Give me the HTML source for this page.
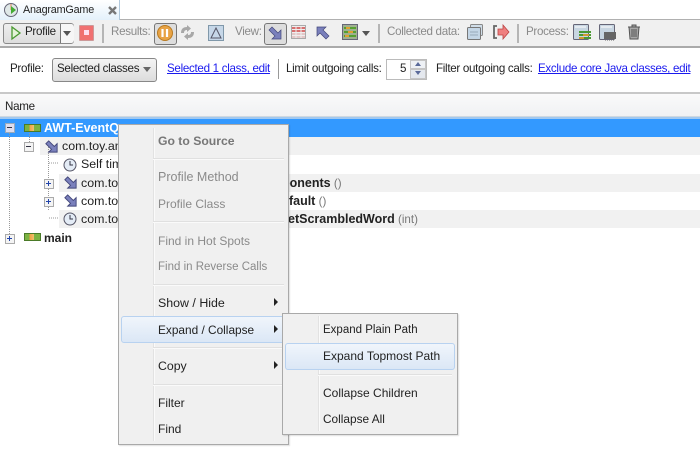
<!DOCTYPE html>
<html><head><meta charset="utf-8"><style>
html,body{margin:0;padding:0;background:#fff}
#p{position:relative;width:700px;height:457px;overflow:hidden;background:#fff;font-family:"Liberation Sans",sans-serif;font-size:11.6px;color:#222}
#p div,#p svg{position:absolute}
.t{white-space:nowrap;line-height:14px;letter-spacing:-.3px}
.g{color:#8a8a8a}
.l{color:#1a1aee;text-decoration:underline}
.b{font-weight:bold}
.n{font-size:12px;letter-spacing:0}
.r{font-size:12.4px;letter-spacing:0}
.m{background:#f0f0f0;border:1px solid #a9a9a9;box-shadow:1px 1px 1px rgba(0,0,0,.12)}
.h{background:linear-gradient(#f0f5fb,#dbe7f6);border:1px solid #b8d2f0;border-radius:3px}
.s{height:1px;background:#e0e0e0;border-bottom:1px solid #fafafa}
.v{width:1px;background:#e2e2e2;border-right:1px solid #fafafa}
.sep{width:2px;background:#b5b5b5;top:24px;height:19px}
.hl{background:#f1f1f1}
</style></head><body><div id="p">
<div style="left:0;top:19px;width:700px;height:1px;background:#b0b0b0"></div>
<div style="left:0;top:0;width:119px;height:20px;background:linear-gradient(#fff,#e4f1fb);border-right:1px solid #b0c8dc"></div>
<svg style="left:3px;top:2px" width="16" height="16" viewBox="0 0 16 16"><circle cx="8" cy="8" r="6.5" fill="#dfe8e8" stroke="#667"/><path d="M8 2v6" stroke="#d85"/><path d="M8 4l5 4-5 4z" fill="#4a3"/></svg>
<div class="t" style="left:23px;top:3px;font-size:10.8px;letter-spacing:-.2px">AnagramGame</div>
<svg style="left:108px;top:6px" width="9" height="9" viewBox="0 0 9 9"><path d="M1 1l7 7M8 1l-7 7" stroke="#777" stroke-width="2.4"/></svg>

<div style="left:0;top:20px;width:700px;height:26px;background:#f0f0f0;border-bottom:2px solid #aaa"></div>
<div style="left:3px;top:23px;width:69px;height:19px;border:1px solid #8a8a8a;border-radius:3px;background:linear-gradient(#eee,#ddd)"></div>
<div style="left:60px;top:24px;width:1px;height:19px;background:#777"></div>
<div style="left:61px;top:24px;width:13px;height:19px;background:#f6f6f6;border-radius:0 3px 3px 0"></div>
<svg style="left:10px;top:25px" width="13" height="16" viewBox="0 0 13 16"><path d="M2 2l8 6-8 6z" fill="#e4f3d8" stroke="#4a9a32" stroke-width="1.3"/></svg>
<div class="t" style="left:25px;top:25px">Profile</div>
<svg style="left:63px;top:31px" width="9" height="5"><path d="M0 0h8L4 5z" fill="#555"/></svg>
<div style="left:79px;top:25px;width:13px;height:14px;background:#f07070;border:1px solid #c99;border-radius:1px"></div>
<div style="left:84px;top:30px;width:5px;height:5px;background:#fde"></div>
<div class="sep" style="left:102px"></div>
<div class="t g" style="left:111px;top:25px">Results:</div>
<div style="left:154px;top:23px;width:21px;height:20px;border:1px solid #777;border-radius:3px;background:#ddd"></div>
<svg style="left:156px;top:24px" width="18" height="18"><circle cx="9" cy="9" r="7.5" fill="#e8a345" stroke="#b97a20"/><path d="M6.500 5v8M11 5v8" stroke="#fff" stroke-width="2.2"/></svg>
<svg style="left:179px;top:24px" width="17" height="17" viewBox="0 0 17 17"><path d="M2 9C2 5 4 3 8 3V1l4 3.500L8 8V6C6 6 5 7 5 9zM15 8c0 4-2 6-6 6v2l-4-3.500L9 9v2c2 0 3-1 3-3z" fill="#a8a8a8"/></svg>
<div style="left:208px;top:25px;width:14px;height:14px;background:#c6d7e8;border:1px solid #8098aa"></div>
<svg style="left:209px;top:26px" width="14" height="14"><path d="M7 2l5 10H2z" fill="none" stroke="#556"/></svg>
<div class="t g" style="left:235px;top:25px">View:</div>
<div style="left:264px;top:23px;width:21px;height:20px;border:1px solid #777;border-radius:3px;background:#ddd"></div>
<svg style="left:267px;top:25px" width="16" height="16" viewBox="0 0 16 16"><path d="M2 5l3-3 6 6 3-3v9H5l3-3z" fill="#7a80bc" stroke="#42467a" stroke-width=".7"/></svg>
<svg style="left:291px;top:25px" width="15" height="14"><rect width="15" height="14" fill="#eee"/><path d="M0 3h15M0 6h15" stroke="#d87070" stroke-width="2"/><path d="M0 9h15M0 12h15" stroke="#d9a0a0"/><path d="M5 0v14M10 0v14" stroke="#eee"/><rect x=".5" y=".5" width="14" height="13" fill="none" stroke="#aaa"/></svg>
<svg style="left:315px;top:25px" width="16" height="15" viewBox="0 0 16 15"><path d="M14 11l-3 3-6-6-3 3V2h9L8 5z" fill="#7a80bc" stroke="#42467a" stroke-width=".7"/></svg>
<svg style="left:342px;top:24px" width="16" height="16"><rect x=".5" y=".5" width="15" height="15" fill="#9fb090" stroke="#667"/><path d="M2 4h12M2 8h12M2 12h12" stroke="#55a030" stroke-width="2"/><path d="M4 4h4M6 8h5M3 12h4" stroke="#e0a030" stroke-width="2"/></svg>
<svg style="left:362px;top:31px" width="9" height="5"><path d="M0 0h8L4 5z" fill="#555"/></svg>
<div class="sep" style="left:378px"></div>
<div class="t g" style="left:387px;top:25px">Collected data:</div>
<svg style="left:467px;top:24px" width="16" height="16"><rect x="3.500" y=".5" width="12" height="11" rx="1" fill="#d0dde8" stroke="#888"/><rect x=".5" y="3.500" width="13" height="12" rx="1" fill="#c4d6e6" stroke="#777"/><path d="M3 8h8M3 11h8" stroke="#9ab"/></svg>
<svg style="left:492px;top:24px" width="18" height="16" viewBox="0 0 18 16"><path d="M5 2H2v12h3" fill="none" stroke="#666" stroke-width="1.8"/><path d="M6 5h5V1l6 7-6 7v-4H6z" fill="#ef7f7f" stroke="#b44" stroke-width=".8"/></svg>
<div class="sep" style="left:517px"></div>
<div class="t g" style="left:526px;top:25px">Process:</div>
<svg style="left:573px;top:24px" width="18" height="17"><rect x=".5" y=".5" width="15" height="15" rx="1" fill="#c8d6e2" stroke="#667"/><path d="M2 3h11" stroke="#fff"/><path d="M6 8h12M6 11h12M6 14h12" stroke="#4a9a32" stroke-width="2"/><path d="M10 11h6M6 14h5" stroke="#d09a30" stroke-width="2"/></svg>
<svg style="left:599px;top:24px" width="18" height="17"><rect x=".5" y=".5" width="15" height="15" rx="1" fill="#c8d6e2" stroke="#667"/><path d="M2 3h11" stroke="#fff"/><rect x="5" y="8" width="12" height="7" fill="#666"/><path d="M6 16h10" stroke="#666" stroke-dasharray="1 1"/></svg>
<svg style="left:627px;top:24px" width="14" height="16" viewBox="0 0 14 16"><path d="M1 3h12M5 3V1h4v2M2 3l1 12h8l1-12z" fill="#a8a8a8" stroke="#555"/><path d="M5 5v8M7 5v8M9 5v8" stroke="#555"/></svg>

<div class="t" style="left:10px;top:62px">Profile:</div>
<div style="left:52px;top:58px;width:103px;height:22px;border:1px solid #888;border-radius:3px;background:linear-gradient(#f4f4f4,#dcdcdc)"></div>
<div class="t" style="left:57px;top:62px">Selected classes</div>
<svg style="left:143px;top:67px" width="9" height="5"><path d="M0 0h8L4 5z" fill="#666"/></svg>
<div class="t l" style="left:167px;top:62px">Selected 1 class, edit</div>
<div style="left:278px;top:59px;width:1px;height:20px;background:#999"></div>
<div class="t" style="left:286px;top:62px">Limit outgoing calls:</div>
<div style="left:386px;top:59px;width:39px;height:19px;border:1px solid #bbb;background:#fff"></div>
<div class="t" style="left:400px;top:62px">5</div>
<div style="left:410px;top:60px;width:16px;height:9px;background:#eef1f5;border:1px solid #c5c5c5;box-sizing:border-box"></div>
<div style="left:410px;top:69px;width:16px;height:10px;background:#e4e8ee;border:1px solid #c5c5c5;box-sizing:border-box"></div>
<svg style="left:414px;top:62px" width="9" height="14"><path d="M1 4h6L4 0zM1 9h6l-3 4z" fill="#5a6a9a"/></svg>
<div class="t" style="left:436px;top:62px">Filter outgoing calls:</div>
<div class="t l" style="left:538px;top:62px">Exclude core Java classes, edit</div>

<div style="left:0;top:92px;width:700px;height:2px;background:#c8c8c8"></div>
<div style="left:0;top:94px;width:700px;height:22px;background:linear-gradient(#fafafa,#f0f1f3)"></div>
<div class="t" style="left:5px;top:100px">Name</div>
<div style="left:0;top:116px;width:700px;height:1px;background:#cfd8e0"></div>
<div style="left:0;top:117px;width:700px;height:2px;background:#a0c8f0"></div>
<div style="left:0;top:119px;width:700px;height:18px;background:#3399ff"></div>

<div class="hl" style="left:40px;top:137px;width:660px;height:18px"></div>
<div class="hl" style="left:59px;top:174px;width:641px;height:18px"></div>
<div class="hl" style="left:59px;top:210px;width:641px;height:18px"></div>

<svg style="left:0;top:119px" width="80" height="130" fill="none" stroke="#999" stroke-dasharray="1 1"><path d="M9.500 14V118M10 119h5M29.500 10v17M30 27h2M48.500 26V91M49 44h10M49 63h-3M49 81h-3M49 99h10"/></svg>
<div style="left:5px;top:123px;width:8px;height:8px;border:1px solid #9ab;background:#dde"></div><div style="left:7px;top:127px;width:5px;height:1px;background:#334"></div>
<div style="left:24px;top:142px;width:8px;height:8px;border:1px solid #aaa;background:#f4f4f4"></div><div style="left:26px;top:146px;width:5px;height:1px;background:#334"></div>
<div style="left:44px;top:179px;width:8px;height:8px;border:1px solid #aaa;background:#f4f4f4"></div><div style="left:46px;top:183px;width:5px;height:1px;background:#24a"></div><div style="left:48px;top:181px;width:1px;height:5px;background:#24a"></div>
<div style="left:44px;top:197px;width:8px;height:8px;border:1px solid #aaa;background:#f4f4f4"></div><div style="left:46px;top:201px;width:5px;height:1px;background:#24a"></div><div style="left:48px;top:199px;width:1px;height:5px;background:#24a"></div>
<div style="left:5px;top:234px;width:8px;height:8px;border:1px solid #aaa;background:#f4f4f4"></div><div style="left:7px;top:238px;width:5px;height:1px;background:#24a"></div><div style="left:9px;top:236px;width:1px;height:5px;background:#24a"></div>

<div style="left:24px;top:124px;width:15px;height:6px;border:1px solid #4a7a28;background:linear-gradient(90deg,#7cb342 30%,#f0a040 30%,#f0c070 60%,#7cb342 60%)"></div>
<div style="left:24px;top:233px;width:15px;height:6px;border:1px solid #4a7a28;background:linear-gradient(90deg,#7cb342 30%,#f0a040 30%,#f0c070 60%,#7cb342 60%)"></div>
<svg style="left:44px;top:139px" width="15" height="15" viewBox="0 0 16 16"><path d="M2 5l3-3 6 6 3-3v9H5l3-3z" fill="#7a80bc" stroke="#42467a"/></svg>
<svg style="left:63px;top:175px" width="15" height="15" viewBox="0 0 16 16"><path d="M2 5l3-3 6 6 3-3v9H5l3-3z" fill="#7a80bc" stroke="#42467a"/></svg>
<svg style="left:63px;top:193px" width="15" height="15" viewBox="0 0 16 16"><path d="M2 5l3-3 6 6 3-3v9H5l3-3z" fill="#7a80bc" stroke="#42467a"/></svg>
<svg style="left:63px;top:158px" width="14" height="14"><circle cx="7" cy="7" r="6" fill="#e4ecf6" stroke="#556"/><path d="M7 3v4h3" stroke="#334" fill="none"/></svg>
<svg style="left:63px;top:212px" width="14" height="14"><circle cx="7" cy="7" r="6" fill="#e4ecf6" stroke="#556"/><path d="M7 3v4h3" stroke="#334" fill="none"/></svg>

<div class="t b" style="left:44px;top:121px;color:#fff;font-size:12.5px;letter-spacing:0">AWT-EventQueue</div>
<div class="t r" style="left:62px;top:139px">com.toy.anagrams</div>
<div class="t r" style="left:81px;top:157px">Self time</div>
<div class="t r" style="left:81px;top:176px">com.toy.anagrams</div>
<div class="t r" style="left:81px;top:194px">com.toy.anagrams</div>
<div class="t r" style="left:81px;top:212px">com.toy.anagrams</div>
<div class="t b" style="left:44px;top:231px;font-size:12px;letter-spacing:0">main</div>
<div class="t" style="left:282px;top:176px;letter-spacing:0"><b style="font-size:12.500px">ponents</b> <span style="color:#777">()</span></div>
<div class="t" style="left:282px;top:194px;letter-spacing:0"><b style="font-size:12.500px">efault</b> <span style="color:#777">()</span></div>
<div class="t" style="left:288px;top:212px;letter-spacing:0"><b style="font-size:12.500px">etScrambledWord</b> <span style="color:#777">(int)</span></div>

<div class="m" style="left:118px;top:124px;width:169px;height:319px"></div>
<div class="v" style="left:153px;top:128px;height:313px"></div>
<div class="s" style="left:153px;top:158px;width:131px"></div>
<div class="s" style="left:153px;top:221px;width:131px"></div>
<div class="s" style="left:153px;top:284px;width:131px"></div>
<div class="s" style="left:153px;top:347px;width:131px"></div>
<div class="s" style="left:153px;top:384px;width:131px"></div>
<div class="h" style="left:121px;top:316px;width:163px;height:25px"></div>
<div class="t n b" style="left:158px;top:134px;color:#777;font-size:12.2px">Go to Source</div>
<div class="t n g" style="left:158px;top:170px;font-size:12.5px">Profile Method</div>
<div class="t n g" style="left:158px;top:197px">Profile Class</div>
<div class="t n g" style="left:158px;top:234px">Find in Hot Spots</div>
<div class="t n g" style="left:158px;top:260px;font-size:11.5px">Find in Reverse Calls</div>
<div class="t n" style="left:158px;top:296px;font-size:12.4px">Show / Hide</div>
<div class="t n" style="left:158px;top:323px;font-size:11.850px">Expand / Collapse</div>
<div class="t n" style="left:158px;top:359px;font-size:12.3px">Copy</div>
<div class="t n" style="left:158px;top:396px">Filter</div>
<div class="t n" style="left:158px;top:422px">Find</div>
<svg style="left:274px;top:298px" width="5" height="8"><path d="M0 0l4 4-4 4z" fill="#222"/></svg>
<svg style="left:274px;top:325px" width="5" height="8"><path d="M0 0l4 4-4 4z" fill="#222"/></svg>
<svg style="left:274px;top:361px" width="5" height="8"><path d="M0 0l4 4-4 4z" fill="#222"/></svg>

<div class="m" style="left:282px;top:313px;width:174px;height:120px"></div>
<div class="v" style="left:318px;top:316px;height:115px"></div>
<div class="s" style="left:318px;top:374px;width:134px"></div>
<div class="h" style="left:285px;top:343px;width:168px;height:25px"></div>
<div class="t n" style="left:323px;top:323px;font-size:11.5px">Expand Plain Path</div>
<div class="t n" style="left:323px;top:349px">Expand Topmost Path</div>
<div class="t n" style="left:323px;top:386px">Collapse Children</div>
<div class="t n" style="left:323px;top:412px;font-size:11.850px">Collapse All</div>
</div></body></html>
